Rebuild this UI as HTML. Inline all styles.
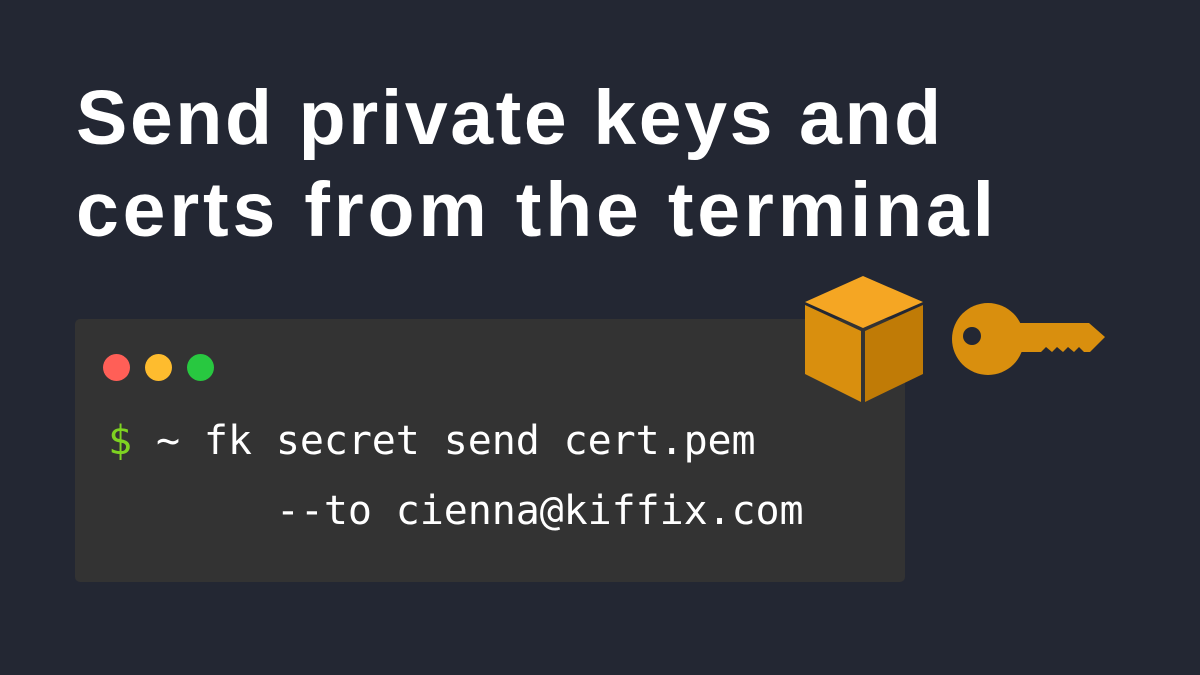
<!DOCTYPE html>
<html><head><style>
html,body{margin:0;padding:0;width:1200px;height:675px;overflow:hidden;background:#232733;}
.t{position:absolute;left:76px;color:#fff;font-family:"Liberation Sans",sans-serif;font-weight:bold;font-size:77px;line-height:1;white-space:nowrap;}
.term{position:absolute;left:75px;top:319px;width:830px;height:263px;background:#333333;border-radius:5px;}
.d{position:absolute;top:35px;width:27px;height:27px;border-radius:50%;}
.c{position:absolute;left:33px;font-family:"DejaVu Sans Mono",monospace;font-size:40px;color:#fff;white-space:pre;line-height:1;letter-spacing:-0.1px;}
</style></head><body>
<div class="t" style="top:80px;letter-spacing:2.6px">Send private keys and</div>
<div class="t" style="top:172px;letter-spacing:3.8px">certs from the terminal</div>
<div class="term">
<div class="d" style="left:28px;background:#ff5f57"></div>
<div class="d" style="left:70px;background:#febc2e"></div>
<div class="d" style="left:112px;background:#28c840"></div>
<div class="c" style="top:102px"><span style="color:#7ed321">$</span> ~ fk secret send cert.pem</div>
<div class="c" style="top:172px">       --to cienna@kiffix.com</div>
</div>
<svg style="position:absolute;left:0;top:0" width="1200" height="675">
<polygon points="863,276 923,302 863,328 805,302" fill="#f5a623"/>
<polygon points="805,305 861,331 861,402 805,374" fill="#d98f0e"/>
<polygon points="865,331 923,305 923,374 865,402" fill="#c07b06"/>
<g fill="#d98f0e">
<circle cx="988" cy="339" r="36"/>
<path d="M1015,323 H1089 L1105,337 L1090,352 L1084,352 L1079,347 L1074,352 L1068,347 L1063,352 L1057,347 L1052,352 L1046,347 L1041,352 L1015,352 Z"/>
</g>
<circle cx="972" cy="336" r="9" fill="#232733"/>
</svg>
</body></html>
